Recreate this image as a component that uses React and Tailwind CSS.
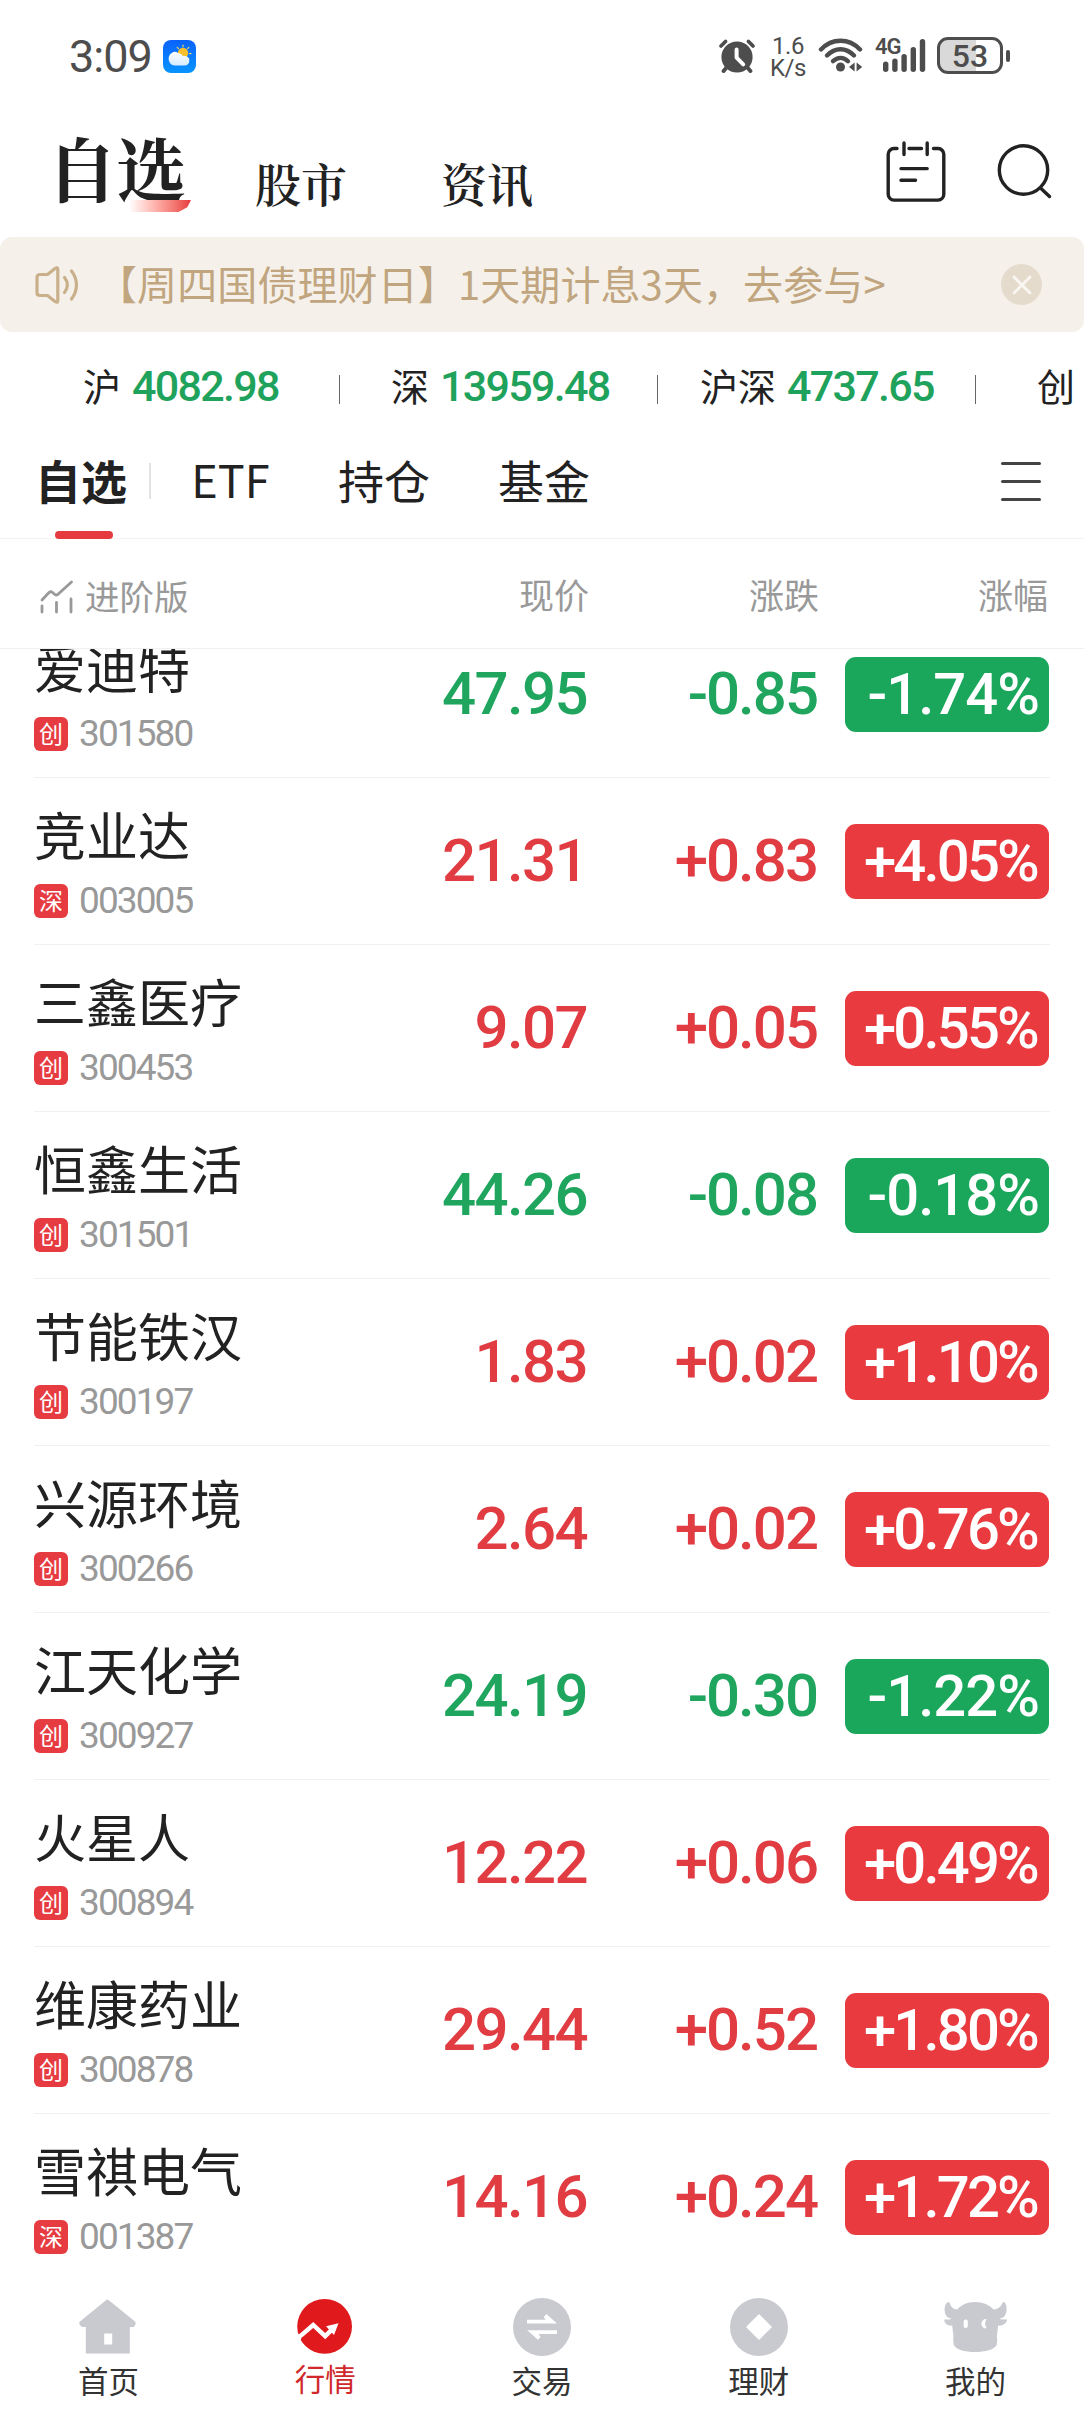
import React, { useState } from 'react';

const INDEXES = [
  { name: '沪', value: '4082.98', className: 'w-[257px]' },
  { name: '深', value: '13959.48', className: 'w-[318px] pl-[51px]' },
  { name: '沪深', value: '4737.65', className: 'w-[318px] pl-[42px]' },
];

const STOCKS = [
  { name: '爱迪特', market: '创', code: '301580', price: '47.95', change: '-0.85', percent: '-1.74%' },
  { name: '竞业达', market: '深', code: '003005', price: '21.31', change: '+0.83', percent: '+4.05%' },
  { name: '三鑫医疗', market: '创', code: '300453', price: '9.07', change: '+0.05', percent: '+0.55%' },
  { name: '恒鑫生活', market: '创', code: '301501', price: '44.26', change: '-0.08', percent: '-0.18%' },
  { name: '节能铁汉', market: '创', code: '300197', price: '1.83', change: '+0.02', percent: '+1.10%' },
  { name: '兴源环境', market: '创', code: '300266', price: '2.64', change: '+0.02', percent: '+0.76%' },
  { name: '江天化学', market: '创', code: '300927', price: '24.19', change: '-0.30', percent: '-1.22%' },
  { name: '火星人', market: '创', code: '300894', price: '12.22', change: '+0.06', percent: '+0.49%' },
  { name: '维康药业', market: '创', code: '300878', price: '29.44', change: '+0.52', percent: '+1.80%' },
  { name: '雪祺电气', market: '深', code: '001387', price: '14.16', change: '+0.24', percent: '+1.72%' },
];

const WeatherIcon = () => (
  <svg width="33" height="33" viewBox="0 0 33 33">
    <defs>
      <linearGradient id="sky" x1="0" y1="0" x2="0" y2="1">
        <stop offset="0" stopColor="#0a62fb" />
        <stop offset="1" stopColor="#0894ff" />
      </linearGradient>
      <linearGradient id="cloud" x1="0" y1="0" x2="0" y2="1">
        <stop offset="0" stopColor="#ffffff" />
        <stop offset="1" stopColor="#d5ebff" />
      </linearGradient>
    </defs>
    <rect width="33" height="33" rx="8" fill="url(#sky)" />
    <circle cx="20" cy="13" r="5.2" fill="#fbc02d" />
    <path d="M20 5v1.8M14.2 7.4l1.2 1.2M25.8 7.4l-1.2 1.2M28 13.6h-1.8M25.8 19l-1-1" stroke="#e9d36a" strokeWidth="1.2" strokeLinecap="round" />
    <path d="M12 25.5a6.2 6.8 0 1 1 3-12.6c2.6.2 4.6 2 5 3.3 3.8-1 6.3 1.4 6.3 4.6 0 3-2 4.7-4.6 4.7z" fill="url(#cloud)" />
  </svg>
);

const AlarmIcon = () => (
  <svg width="36" height="34" viewBox="0 0 36 34" fill="none" strokeLinecap="round">
    <circle cx="18" cy="18" r="15.6" fill="#4d4d4d" />
    <path d="M2 7l4.5-4.6M34 7l-4.5-4.6" stroke="#4d4d4d" strokeWidth="3.6" />
    <path d="M8 28l-3.4 4M28 28l3.4 4" stroke="#4d4d4d" strokeWidth="4" />
    <path d="M17.6 10.5v8.2l6.6 6.6" stroke="#fff" strokeWidth="4" strokeLinejoin="round" />
  </svg>
);

const WifiIcon = () => (
  <svg width="46" height="36" viewBox="0 0 46 36" fill="none">
    <path d="M3 12.5C14 .8 31 .8 42 12.5" stroke="#4d4d4d" strokeWidth="4.4" strokeLinecap="round" />
    <path d="M9 18.5c8-8.4 19-8.4 27 0" stroke="#4d4d4d" strokeWidth="4.4" strokeLinecap="round" />
    <path d="M15 24.2c4.6-4.4 10.5-4.4 15 0" stroke="#4d4d4d" strokeWidth="4.4" strokeLinecap="round" />
    <circle cx="22.5" cy="30" r="4.5" fill="#4d4d4d" />
    <path d="M36.6 25.5v9l-5.6-4.5zM38.6 25.5v9l5.6-4.5z" fill="#4d4d4d" />
  </svg>
);

const SignalIcon = () => (
  <svg width="43" height="33" viewBox="0 0 43 33" fill="#4d4d4d">
    <rect x="0" y="22.5" width="5.4" height="10.5" rx="2.7" />
    <rect x="9.2" y="19.5" width="5.4" height="13.5" rx="2.7" />
    <rect x="18.4" y="15" width="5.4" height="18" rx="2.7" />
    <rect x="27.6" y="8" width="5.4" height="25" rx="2.7" />
    <rect x="36.8" y="0" width="5.4" height="33" rx="2.7" />
  </svg>
);

const CalendarIcon = () => (
  <svg width="60" height="62" viewBox="0 0 60 62" fill="none" stroke="#222" strokeWidth="3.4" strokeLinecap="round">
    <path d="M11 7.5H8a5.8 5.8 0 0 0-5.8 5.8v40A5.8 5.8 0 0 0 8 59.1h44a5.8 5.8 0 0 0 5.8-5.8v-40A5.8 5.8 0 0 0 52 7.5h-4.5" />
    <path d="M23 7.5h12.5M18 2v11.5M41.2 2v11.5M15 27.6h26.2M15 39.2h14.5" />
  </svg>
);

const SearchIcon = () => (
  <svg width="56" height="56" viewBox="0 0 56 56" fill="none" stroke="#222" strokeWidth="3.4" strokeLinecap="round">
    <circle cx="26.5" cy="26" r="24.2" />
    <path d="M44 44.5l8.5 8" />
  </svg>
);

const SpeakerIcon = () => (
  <svg width="44" height="38" viewBox="0 0 44 38" fill="none" stroke="#c9b08b" strokeWidth="3.2" strokeLinecap="round" strokeLinejoin="round">
    <path d="M2 11.5q0-3 3-3h7.5l7.5-6q2.8-1.8 2.8 1v31q0 2.8-2.8 1l-7.5-6H5q-3 0-3-3z" />
    <path d="M29.5 11.5c3.8 4.5 3.8 10.5 0 15M36.5 5c6.6 8.5 6.6 19.5 0 28" />
  </svg>
);

const ChartIcon = () => (
  <svg width="34" height="34" viewBox="0 0 34 34" fill="none" stroke="#999" strokeWidth="2.8" strokeLinecap="round" strokeLinejoin="round">
    <path d="M2 20l7-7.5q1.8-1.5 3.5 0l2.3 1.9q1.7 1.2 3.2-.2L31.5 2" />
    <path d="M2 26v6M16.5 22.5V32M31 19v13" />
  </svg>
);

const HomeIcon = () => (
  <svg width="60" height="60" viewBox="0 0 60 60" fill="#c9cad0">
    <path fillRule="evenodd" d="M28 3.2q1.4-1.4 2.8 0L57 24.6q1.4 1.5.4 3l-1.2 1.8q-.5.6-1.4.6H51.8v26.6H7.8V30H4.6q-.9 0-1.5-.7L1.6 27.6q-1.2-1.5.4-3zM26.2 36.4v11h8v-11z" />
  </svg>
);

const MarketIcon = () => (
  <svg width="60" height="60" viewBox="0 0 60 60">
    <circle cx="29.6" cy="29.4" r="27.4" fill="#e0191d" />
    <path d="M1 39.5q3.5.5 5.5-1.5L18.2 28l12 11.2 8-7.8" fill="none" stroke="#fff" strokeWidth="4.4" />
    <path d="M0 41l7-1.5-2 5L0 49z" fill="#fff" />
    <path d="M43.5 26.2L31 29.2l8 8.8z" fill="#fff" />
  </svg>
);

const TradeIcon = () => (
  <svg width="60" height="60" viewBox="0 0 60 60">
    <circle cx="30" cy="30" r="29" fill="#c9cad0" />
    <path d="M15 22.7h18.6l-1.8-2.8 2.6-3L45 26.5H15zM45 33.2H15.2L26 42.8l2.6-2.8-2-3H45z" fill="#fff" />
  </svg>
);

const WealthIcon = () => (
  <svg width="60" height="60" viewBox="0 0 60 60">
    <circle cx="30" cy="30" r="29" fill="#c9cad0" />
    <path d="M30 17l13 13-13 13-13-13z" fill="#fff" />
  </svg>
);

const MineIcon = () => (
  <svg width="64" height="60" viewBox="0 0 64 60">
    <path
      d="M4.5 5C.5 5-1.5 17 4 20.5l3.5 1.2C5 23 2 22.6.4 22.4c-.6 3 2.6 6.6 7.8 6.2L9.5 40c-.8 3 .2 6 .3 8 2 4.5 11 7 21.2 7s19.500-2.500 21.700-7c.1-2 .9-5 .1-8l1.300-11.400c5.200.4 9.200-3.200 8.900-6.200-1.600.2-4.600.6-7.500-.7l3.500-1.200c5.500-3.500 4-15.500.5-15.500-1.500 0-1.500 6.500-9.800 7.500C45.500 8 39 5 31 5s-14 3-18 7.500C5.500 11.500 6.500 5 4.500 5z"
      fill="#c9cad0"
    />
    <rect x="19.6" y="22.4" width="4.2" height="8.6" rx="2" fill="#fff" />
    <path d="M42 22.4c-5.500 0-5.500 8.600 0 8.600-1.800-2.600-1.800-6 0-8.600z" fill="#fff" stroke="#fff" strokeWidth="1" />
  </svg>
);

const NAV_ITEMS = [
  { label: '首页', Icon: HomeIcon },
  { label: '行情', Icon: MarketIcon },
  { label: '交易', Icon: TradeIcon },
  { label: '理财', Icon: WealthIcon },
  { label: '我的', Icon: MineIcon },
];

const StatusBar = () => (
  <div className="flex h-[115px] shrink-0 items-start pl-[69px] pr-[74px] font-[Roboto] text-[#4d4d4d]">
    <span className="mt-[34px] w-[94px] text-[45px] leading-[46px] tracking-[-1px]">3:09</span>
    <span className="mt-10">
      <WeatherIcon />
    </span>
    <div className="ml-auto flex items-start">
      <span className="mt-[39px]">
        <AlarmIcon />
      </span>
      <div className="ml-[15px] mt-[35px] flex w-9 flex-col text-center text-[24px] leading-[22px] tracking-[-0.5px]">
        <span>1.6</span>
        <span>K/s</span>
      </div>
      <span className="ml-[12px] mt-[37px]">
        <WifiIcon />
      </span>
      <div className="relative ml-[19px] mt-[39px]">
        <SignalIcon />
        <span className="absolute -left-[8px] -top-[3px] text-[22px] font-semibold leading-[22px] tracking-[-1px]">4G</span>
      </div>
      <div className="ml-[11px] mt-[37px] flex items-center gap-[3px]">
        <div className="flex h-[37px] w-[66px] items-center justify-center rounded-[11px] border-[3px] border-[#4d4d4d] bg-[linear-gradient(90deg,#d9d9d9_60%,#fff_60%)] text-[32px] font-medium leading-none">
          53
        </div>
        <span className="h-3 w-1 rounded-sm bg-[#4d4d4d]" />
      </div>
    </div>
  </div>
);

const Header = () => (
  <div className="flex h-[122px] shrink-0 items-start pl-[47px] pr-[31px] font-['Noto_Serif_CJK_SC','Noto_Sans_CJK_SC',serif] font-bold text-[#222]">
    <div className="relative mt-[17px] w-[136px] whitespace-nowrap text-[70px] leading-[70px] tracking-[-1px]">
      自选
      <span className="absolute left-[82px] top-[68px] h-3 w-[62px] rounded-br-[14px] bg-gradient-to-r from-white to-[#e5353c] [clip-path:polygon(0_0,100%_0,94%_60%,80%_100%,0_100%)]" />
    </div>
    <span className="ml-[72px] mt-[44px] text-[46px] font-semibold leading-[46px]">股市</span>
    <span className="ml-[94px] mt-[44px] text-[46px] font-semibold leading-[46px]">资讯</span>
    <span className="ml-auto mt-[26px]">
      <CalendarIcon />
    </span>
    <span className="ml-[51px] mt-[29px]">
      <SearchIcon />
    </span>
  </div>
);

const Notice = ({ onClose }) => (
  <div className="flex h-[95px] shrink-0 items-center rounded-xl bg-[#f5f1ea] pl-[35px] pr-[42px] text-[#c0a57f]">
    <SpeakerIcon />
    <span className="-mt-1 ml-[18px] text-[40px] tracking-[0.1px]">【周四国债理财日】1天期计息3天，去参与&gt;</span>
    <button onClick={onClose} className="ml-auto flex h-[41px] w-[41px] items-center justify-center rounded-full bg-[#e5dbcd]">
      <svg width="20" height="20" viewBox="0 0 20 20" stroke="#faf7f2" strokeWidth="2.8" strokeLinecap="round">
        <path d="M2 2l16 16M18 2L2 18" />
      </svg>
    </button>
  </div>
);

const IndexBar = () => (
  <div className="flex h-[116px] shrink-0 items-center overflow-hidden whitespace-nowrap pl-[83px] text-[38px]">
    {INDEXES.map((item) => (
      <div key={item.name} className={`flex shrink-0 items-center ${item.className}`}>
        <span className="-mt-[12px]">{item.name}</span>
        <span className="-mt-[7px] ml-[11px] font-[Roboto] text-[43px] font-medium tracking-[-1.7px] text-[#1fa25c]">{item.value}</span>
        <span className="-mt-px ml-auto h-[29px] w-px bg-[#666]" />
      </div>
    ))}
    <span className="-mt-[12px] ml-[61px]">创</span>
  </div>
);

const Tabs = () => {
  const [active, setActive] = useState('自选');

  return (
    <div className="flex h-[91px] shrink-0 items-start border-b border-[#f3f3f3] pl-[35px] pr-[43px] pt-px text-[46px] leading-[60px]">
      <button onClick={() => setActive('自选')} className={active === '自选' ? 'relative font-bold' : 'relative'}>
        自选
        {active === '自选' && <span className="absolute left-[20px] top-[82px] h-2 w-[58px] rounded-full bg-[#e53a40]" />}
      </button>
      <span className="ml-[22px] mt-[14px] h-9 w-[2px] bg-[#e3e3e3]" />
      <button onClick={() => setActive('ETF')} className="ml-[40px] w-[79px] text-[45px]">ETF</button>
      <button onClick={() => setActive('持仓')} className="ml-[68px]">持仓</button>
      <button onClick={() => setActive('基金')} className="ml-[68px]">基金</button>
      <div className="ml-auto mt-[13px] flex flex-col gap-[15px]">
        <span className="h-[3px] w-10 rounded-full bg-[#444]" />
        <span className="h-[3px] w-10 rounded-full bg-[#444]" />
        <span className="h-[3px] w-10 rounded-full bg-[#444]" />
      </div>
    </div>
  );
};

const ListHeader = () => (
  <div className="grid h-[110px] shrink-0 grid-cols-[554px_230px_1fr] items-center border-b border-[#f0f0f0] pl-[35px] pr-[36px] text-right text-[35px] text-[#999]">
    <div className="flex items-center">
      <span className="ml-[5px] mt-[7px]">
        <ChartIcon />
      </span>
      <span className="ml-[11px] mt-[5px] text-[34.5px]">进阶版</span>
      <span className="ml-auto mt-[2px]">现价</span>
    </div>
    <span className="mt-[2px]">涨跌</span>
    <span className="mt-[2px]">涨幅</span>
  </div>
);

const StockRow = ({ stock }) => {
  const up = stock.change.startsWith('+');

  return (
    <div className={`mx-[34px] grid h-[167px] grid-cols-[221px_334px_230px_1fr] items-center border-b border-[#f0f0f0] text-right font-[Roboto] text-[60px] font-medium ${up ? 'text-[#e03c42]' : 'text-[#1fa55e]'}`}>
      <div className="flex flex-col gap-[20px] pb-px text-left font-normal">
        <span className="whitespace-nowrap font-['Noto_Sans_CJK_SC',sans-serif] text-[52px] leading-[60px] text-[#222]">{stock.name}</span>
        <div className="flex h-[34px] items-center">
          <span className="flex h-[34px] w-[34px] items-center justify-center rounded-[6px] bg-[#e63b40] pb-[2px] font-['Noto_Sans_CJK_SC',sans-serif] text-[24px] leading-none text-white">{stock.market}</span>
          <span className="ml-[11px] text-[37px] leading-[34px] tracking-[-1.9px] text-[#999]">{stock.code}</span>
        </div>
      </div>
      <span className="pr-[2px] leading-[60px] tracking-[-1.6px]">{stock.price}</span>
      <span className="pr-[2px] leading-[60px] tracking-[-2px]">{stock.change}</span>
      <div className={`ml-[26px] mr-px h-[75px] rounded-[11px] text-[58px] leading-[75px] text-white ${up ? 'bg-[#e83a3f] pr-[12px] tracking-[-2.8px]' : 'bg-[#1aa75c] pr-[10px] tracking-[-1px]'}`}>{stock.percent}</div>
    </div>
  );
};

const BottomNav = () => {
  const [current, setCurrent] = useState('行情');

  return (
    <div className="grid h-[132px] shrink-0 grid-cols-5 bg-white pt-[17px] text-[30.5px]">
      {NAV_ITEMS.map(({ label, Icon }) => (
        <button key={label} onClick={() => setCurrent(label)} className="flex flex-col items-center">
          <Icon />
          <span className={label === current ? 'mt-[1px] leading-[40px] text-[#d0282b]' : 'mt-[3px] leading-[40px] text-[#333]'}>{label}</span>
        </button>
      ))}
    </div>
  );
};

const App = () => {
  const [showNotice, setShowNotice] = useState(true);

  return (
    <div className="flex h-[2412px] w-[1084px] flex-col overflow-hidden bg-white font-['Noto_Sans_CJK_SC',sans-serif] text-[#222]">
      <StatusBar />
      <Header />
      {showNotice && <Notice onClose={() => setShowNotice(false)} />}
      <IndexBar />
      <Tabs />
      <ListHeader />
      <div className="min-h-0 flex-1 overflow-hidden">
        {/* list is scrolled part of the way into its first row */}
        <div className="-mt-[38px]">
          {STOCKS.map((stock) => (
            <StockRow key={stock.code} stock={stock} />
          ))}
        </div>
      </div>
      <BottomNav />
    </div>
  );
};

export default App;
